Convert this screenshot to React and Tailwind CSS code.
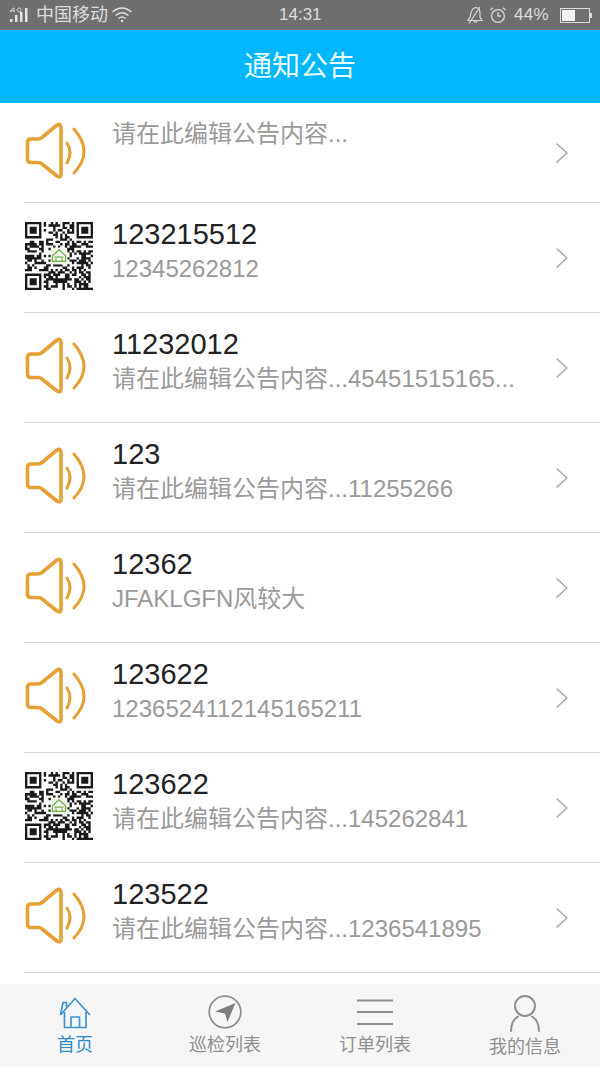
import React from 'react';

const notices = [
  { icon: 'speaker', title: '', text: '请在此编辑公告内容...', first: true },
  { icon: 'qr', title: '123215512', text: '12345262812' },
  { icon: 'speaker', title: '11232012', text: '请在此编辑公告内容...45451515165...' },
  { icon: 'speaker', title: '123', text: '请在此编辑公告内容...11255266' },
  { icon: 'speaker', title: '12362', text: 'JFAKLGFN风较大' },
  { icon: 'speaker', title: '123622', text: '123652411214516521​1' },
  { icon: 'qr', title: '123622', text: '请在此编辑公告内容...145262841' },
  { icon: 'speaker', title: '123522', text: '请在此编辑公告内容...1236541895' },
];

const tabs = [
  { label: '首页', icon: 'home', active: true },
  { label: '巡检列表', icon: 'compass' },
  { label: '订单列表', icon: 'menu' },
  { label: '我的信息', icon: 'user' },
];

const SpeakerIcon = () => (
  <svg width="62" height="60" viewBox="0 0 62 60" fill="none" stroke="#e5a036" strokeWidth="3.6" strokeLinecap="round" strokeLinejoin="round">
    <path d="M33 4 L18 16.5 Q16.5 18 14 18 H7 Q3.5 18 3.5 21.5 V38 Q3.5 41.5 7 41.5 H14 Q16.5 41.5 18 43 L33 55 Q37 57.5 37 53 V7 Q37 2 33 4 Z" />
    <path d="M43 22 Q49 31 43 42" strokeWidth="3" />
    <path d="M50 8 Q70 31 50 52" strokeWidth="3" />
  </svg>
);

// finder square for the qr code, in module units
const finder = (x, y) =>
  `M${x} ${y}h7v7h-7zM${x + 1} ${y + 1}v5h5v-5zM${x + 2} ${y + 2}h3v3h-3z`;

const buildQrPath = () => {
  const size = 29;
  let seed = 90127;
  let d = '';
  for (let y = 0; y < size; y++) {
    for (let x = 0; x < size; x++) {
      seed = (seed * 1103515245 + 12345) & 0x7fffffff;
      const inFinder = (x < 8 && y < 8) || (x > 20 && y < 8) || (x < 8 && y > 20);
      const inLogo = x > 10 && x < 18 && y > 10 && y < 18;
      if (!inFinder && !inLogo && (seed >> 16) % 100 < 52) d += `M${x} ${y}h1v1h-1z`;
    }
  }
  return d + finder(0, 0) + finder(22, 0) + finder(0, 22);
};

const qrPath = buildQrPath();

const QrIcon = () => (
  <svg width="68" height="68" viewBox="0 0 29 29" className="ml-px">
    <path d={qrPath} fill="#1a1a1a" fillRule="evenodd" />
    <rect x="11" y="11" width="7" height="7" rx="1.5" fill="#f2f7ee" />
    <path d="M14.5 11.8 L17.3 14.4 V16.8 H11.7 V14.4 Z M12.6 15 H16.4 M13.2 16.8 V15.6 M15.8 16.8 V15.6" fill="none" stroke="#6fb04a" strokeWidth="0.55" strokeLinejoin="round" />
  </svg>
);

const Chevron = () => (
  <svg width="14" height="22" viewBox="0 0 14 22" fill="none" stroke="#a8a8a8" strokeWidth="1.6" strokeLinecap="round" strokeLinejoin="round">
    <path d="M2 2 L12 11 L2 20" />
  </svg>
);

const TabIcon = ({ name }) => {
  if (name === 'home') {
    return (
      <svg width="40" height="40" viewBox="0 0 40 40" fill="none" stroke="#3f93cf" strokeWidth="1.7" strokeLinejoin="round">
        <path d="M5.5 21 L20 4.5 L35 21 M5.5 21 L8 8.5 H11.5 V13" />
        <path d="M9.5 18 V33.5 H31 V18" />
        <path d="M16 33.5 V23 H24.5 V33.5" />
      </svg>
    );
  }
  if (name === 'compass') {
    return (
      <svg width="40" height="40" viewBox="0 0 40 40" fill="none">
        <circle cx="20" cy="18" r="15.8" stroke="#8f8f8f" strokeWidth="1.7" />
        <path d="M29 9 L8.5 17.5 L18.5 19.5 L21 28 Z" fill="#7f7f7f" transform="translate(1.5 0)" />
      </svg>
    );
  }
  if (name === 'menu') {
    return (
      <svg width="40" height="40" viewBox="0 0 40 40" fill="none" stroke="#8f8f8f" strokeWidth="2">
        <path d="M2 6.5 H38 M2 18 H38 M2 30 H38" />
      </svg>
    );
  }
  return (
    <svg width="40" height="40" viewBox="0 0 40 40" fill="none" stroke="#8f8f8f" strokeWidth="2" strokeLinecap="round">
      <circle cx="20" cy="12" r="10" />
      <path d="M6 37 C6 29 9 25 13 22.5 M34 37 C34 29 31 25 27 22.5" />
    </svg>
  );
};

const StatusBar = () => (
  <div className="h-[30px] shrink-0 bg-[#6f6f6f] flex items-center pl-[9px] pr-[8px] text-[#dcdcdc] text-[17px] font-['Liberation_Sans','Noto_Sans_CJK_SC',sans-serif]">
    <svg width="22" height="20" viewBox="0 0 22 20" fill="#e4e4e4">
      <rect x="1" y="14" width="2.5" height="3" />
      <rect x="6" y="10" width="2.5" height="7" />
      <rect x="11" y="7" width="2.5" height="10" />
      <rect x="16" y="3" width="2.5" height="14" />
      <path d="M1 7 L4 3 H5 V7 M1 6 H6" fill="none" stroke="#e4e4e4" strokeWidth="0.8" />
      <path d="M12 4 A2 2 0 1 0 12 6 V5 H11" fill="none" stroke="#e4e4e4" strokeWidth="0.8" />
    </svg>
    <span className="ml-[5px] w-[72px] text-[18px]">中国移动</span>
    <svg width="22" height="18" viewBox="0 0 22 18" fill="none" stroke="#e0e0e0" strokeWidth="1.4" className="ml-[3px]">
      <path d="M1.5 6 Q11 -2 20.5 6 M4.5 9.5 Q11 4 17.5 9.5 M7.5 12.5 Q11 9.5 14.5 12.5" />
      <circle cx="11" cy="15" r="1.2" fill="#e0e0e0" stroke="none" />
    </svg>
    <span className="ml-[146px] w-[44px]">14:31</span>
    <svg width="18" height="20" viewBox="0 0 18 20" fill="none" stroke="#d8d8d8" strokeWidth="1.2" className="ml-[143px]">
      <path d="M2 15.5 H16 L14 12 V8 Q14 3 10 2.5 Q6 3 5 8 L4 12 Z M8 16 Q9.5 18.5 11 16 M14 2 L3 18.5" />
    </svg>
    <svg width="18" height="18" viewBox="0 0 18 18" fill="none" stroke="#d8d8d8" strokeWidth="1.3" className="ml-[5px]">
      <circle cx="9" cy="10" r="6.4" />
      <path d="M9 6 V10 H12 M1.5 4 L4 1.8 M16.5 4 L14 1.8" />
    </svg>
    <span className="ml-[7px] w-[44px] tracking-[0.3px]">44%</span>
    <div className="ml-[2px] w-[30px] h-[15px] border border-[#dcdcdc] flex items-stretch p-px">
      <div className="w-[13px] bg-[#f2f2f2]" />
    </div>
    <div className="w-[2px] h-[5px] bg-[#dcdcdc]" />
  </div>
);

const NoticeRow = ({ notice }) => (
  <div className={`${notice.first ? 'h-[100px]' : 'h-[110px]'} ml-6 border-b border-[#d4d4d4] flex items-center`}>
    <div className="w-[88px] shrink-0 mb-1">
      {notice.icon === 'qr' ? <QrIcon /> : <SpeakerIcon />}
    </div>
    <div className="flex-1 min-w-0 self-start pt-[14px]">
      {notice.title && (
        <div className="h-[34px] leading-[34px] text-[29px] text-[#222222]">{notice.title}</div>
      )}
      <div className={`${notice.title ? 'mt-px' : ''} h-[34px] leading-[34px] text-[24px] text-[#9a9a9a] whitespace-nowrap`}>{notice.text}</div>
    </div>
    <div className="w-[45px] shrink-0">
      <Chevron />
    </div>
  </div>
);

const TabBar = () => (
  <div className="h-[83px] shrink-0 bg-[#f6f6f6] grid grid-cols-4 pt-[10px]">
    {tabs.map((tab) => (
      <div key={tab.label} className="flex flex-col items-center">
        <TabIcon name={tab.icon} />
        <span className={`${tab.active ? 'text-[#2f8acb]' : 'text-[#8f8f8f]'} ${tab.icon === 'user' ? 'mt-px' : '-mt-px'} h-6 leading-6 text-[18px]`}>
          {tab.label}
        </span>
      </div>
    ))}
  </div>
);

const App = () => (
  <div className="w-[600px] h-[1067px] overflow-hidden bg-white flex flex-col font-['Liberation_Sans','Noto_Sans_CJK_SC',sans-serif]">
    <StatusBar />
    <div className="h-[73px] shrink-0 bg-[#00b7ff] flex items-center justify-center text-[28px] text-[#e8fbff]">
      通知公告
    </div>
    <div className="flex-1 min-h-0 overflow-hidden">
      {notices.map((notice, i) => (
        <NoticeRow key={i} notice={notice} />
      ))}
    </div>
    <TabBar />
  </div>
);

export default App;
